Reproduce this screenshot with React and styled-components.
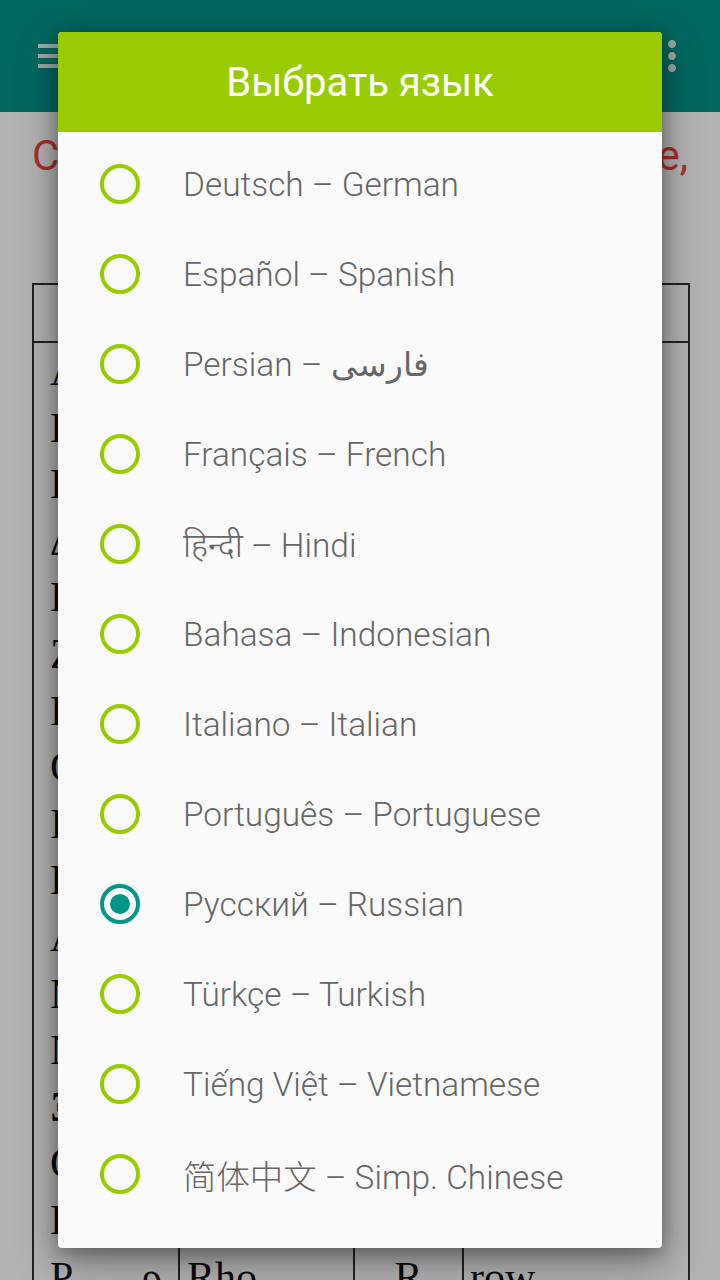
import React from 'react';
import styled, { createGlobalStyle } from 'styled-components';

const GlobalStyle = createGlobalStyle`
  html, body { margin: 0; padding: 0; background: #ffffff; }
  body { font-family: Roboto, "Noto Sans", "DejaVu Sans", sans-serif; }
`;

const Screen = styled.div`
  position: relative;
  width: 720px;
  height: 1280px;
  overflow: hidden;
  background: #ffffff;
`;

const AppBar = styled.header`
  height: 112px;
  background: #009688;
  display: flex;
  align-items: center;
  justify-content: space-between;
  padding: 0 24px 0 32px;
  box-sizing: border-box;
`;

const IconBox = styled.svg`
  width: 48px;
  height: 48px;
  display: block;
  fill: #ffffff;
  opacity: 0.9;
`;

const Content = styled.main`
  padding: 0 32px;
`;

const Intro = styled.p`
  margin: 19px 0 0;
  color: #f44336;
  font-family: Roboto, sans-serif;
  font-size: 42px;
  line-height: 49px;
  text-align: justify;
  text-align-last: center;
`;

const GreekTable = styled.table`
  width: 656px;
  margin-top: 54px;
  border-collapse: collapse;
  table-layout: fixed;
  border: 2px solid #333;
  font-family: "Liberation Serif", serif;
  font-size: 42px;
  color: #111;
`;

const HeadCell = styled.th`
  height: 56px;
  padding: 0;
  border: 2px solid #333;
  font-size: 26px;
  font-weight: bold;
  text-align: center;
`;

const BodyRow = styled.tr`
  height: 56.6px;
`;

const Cell = styled.td`
  padding: 0 ${(p) => p.$pr || 0}px 0 ${(p) => p.$pl || 0}px;
  border-left: 2px solid #333;
  border-right: 2px solid #333;
  text-align: ${(p) => p.$align || 'left'};
  white-space: nowrap;
  line-height: 56.6px;
`;

const LetterPair = styled.span`
  display: flex;
  justify-content: space-between;
`;

const Scrim = styled.div`
  position: absolute;
  inset: 0;
  background: rgba(0, 0, 0, 0.3);
`;

const Dialog = styled.section`
  position: absolute;
  top: 32px;
  left: 58px;
  width: 604px;
  height: 1216px;
  background: #fafafa;
  border-radius: 4px;
  overflow: hidden;
  box-shadow: 0 14px 40px rgba(0, 0, 0, 0.35), 0 4px 18px rgba(0, 0, 0, 0.3);
  display: flex;
  flex-direction: column;
`;

const DialogTitle = styled.h2`
  margin: 0;
  height: 100px;
  flex: none;
  background: #99cc00;
  color: #ffffff;
  display: flex;
  align-items: center;
  justify-content: center;
  font-family: Roboto, sans-serif;
  font-weight: 400;
  font-size: 40px;
`;

const LanguageList = styled.ul`
  list-style: none;
  margin: 0;
  padding: 7px 0 29px;
`;

const LanguageRow = styled.li`
  height: 90px;
  display: flex;
  align-items: center;
  padding-left: 42px;
  gap: 43px;
`;

const RadioMark = styled.span`
  position: relative;
  width: 40px;
  height: 40px;
  flex: none;
  box-sizing: border-box;
  border-radius: 50%;
  border: 4px solid ${(p) => (p.$checked ? '#009688' : '#99cc00')};
  &::after {
    content: '';
    position: absolute;
    left: 6px;
    top: 6px;
    width: 20px;
    height: 20px;
    border-radius: 50%;
    background: #009688;
    display: ${(p) => (p.$checked ? 'block' : 'none')};
  }
`;

const LanguageLabel = styled.span`
  font-family: Roboto, "Noto Sans", "DejaVu Sans", "Noto Sans CJK SC", sans-serif;
  font-weight: 300;
  font-size: 33.4px;
  color: #666666;
  white-space: nowrap;
`;

const languages = [
  'Deutsch – German',
  'Español – Spanish',
  'Persian – فارسی',
  'Français – French',
  'हिन्दी – Hindi',
  'Bahasa – Indonesian',
  'Italiano – Italian',
  'Português – Portuguese',
  'Русский – Russian',
  'Türkçe – Turkish',
  'Tiếng Việt – Vietnamese',
  '简体中文 – Simp. Chinese',
];

const greek = [
  ['Α', 'α', 'Alpha', 'A', 'art'],
  ['Β', 'β', 'Beta', 'V', 'vet'],
  ['Γ', 'γ', 'Gamma', 'G', 'yes'],
  ['Δ', 'δ', 'Delta', 'D', 'this'],
  ['Ε', 'ε', 'Epsilon', 'E', 'met'],
  ['Ζ', 'ζ', 'Zeta', 'Z', 'zoo'],
  ['Η', 'η', 'Eta', 'I', 'meet'],
  ['Θ', 'θ', 'Theta', 'Th', 'think'],
  ['Ι', 'ι', 'Iota', 'I', 'meet'],
  ['Κ', 'κ', 'Kappa', 'K', 'kit'],
  ['Λ', 'λ', 'Lambda', 'L', 'lamp'],
  ['Μ', 'μ', 'Mu', 'M', 'man'],
  ['Ν', 'ν', 'Nu', 'N', 'net'],
  ['Ξ', 'ξ', 'Xi', 'X', 'box'],
  ['Ο', 'ο', 'Omicron', 'O', 'lot'],
  ['Π', 'π', 'Pi', 'P', 'pet'],
  ['Ρ', 'ρ', 'Rho', 'R', 'row'],
  ['Σ', 'σ', 'Sigma', 'S', 'set'],
];

export default function App() {
  return (
    <>
      <GlobalStyle />
      <Screen>
        <AppBar>
          <IconBox viewBox="0 0 24 24">
            <path d="M3 18h18v-2H3v2zm0-5h18v-2H3v2zm0-7v2h18V6H3z" />
          </IconBox>
          <IconBox viewBox="0 0 24 24">
            <path d="M12 8c1.1 0 2-.9 2-2s-.9-2-2-2-2 .9-2 2 .9 2 2 2zm0 2c-1.1 0-2 .9-2 2s.9 2 2 2 2-.9 2-2-.9-2-2-2zm0 6c-1.1 0-2 .9-2 2s.9 2 2 2 2-.9 2-2-.9-2-2-2z" />
          </IconBox>
        </AppBar>
        <Content>
          <Intro>Click a letter to hear each one, pronounced slowly</Intro>
          <GreekTable>
            <colgroup>
              <col style={{ width: 146 }} />
              <col style={{ width: 175 }} />
              <col style={{ width: 109 }} />
              <col style={{ width: 226 }} />
            </colgroup>
            <thead>
              <tr>
                <HeadCell>Letter</HeadCell>
                <HeadCell>Name</HeadCell>
                <HeadCell>Latin</HeadCell>
                <HeadCell>Sound</HeadCell>
              </tr>
            </thead>
            <tbody>
              {greek.map(([up, low, name, lat, sound]) => (
                <BodyRow key={name}>
                  <Cell $pl={16} $pr={16}>
                    <LetterPair>
                      <span>{up}</span>
                      <span>{low}</span>
                    </LetterPair>
                  </Cell>
                  <Cell $pl={7}>{name}</Cell>
                  <Cell $align="center">{lat}</Cell>
                  <Cell $pl={6}>{sound}</Cell>
                </BodyRow>
              ))}
            </tbody>
          </GreekTable>
        </Content>
        <Scrim />
        <Dialog>
          <DialogTitle>Выбрать язык</DialogTitle>
          <LanguageList>
            {languages.map((lang) => (
              <LanguageRow key={lang}>
                <RadioMark $checked={lang.startsWith('Русский')} />
                <LanguageLabel>{lang}</LanguageLabel>
              </LanguageRow>
            ))}
          </LanguageList>
        </Dialog>
      </Screen>
    </>
  );
}
